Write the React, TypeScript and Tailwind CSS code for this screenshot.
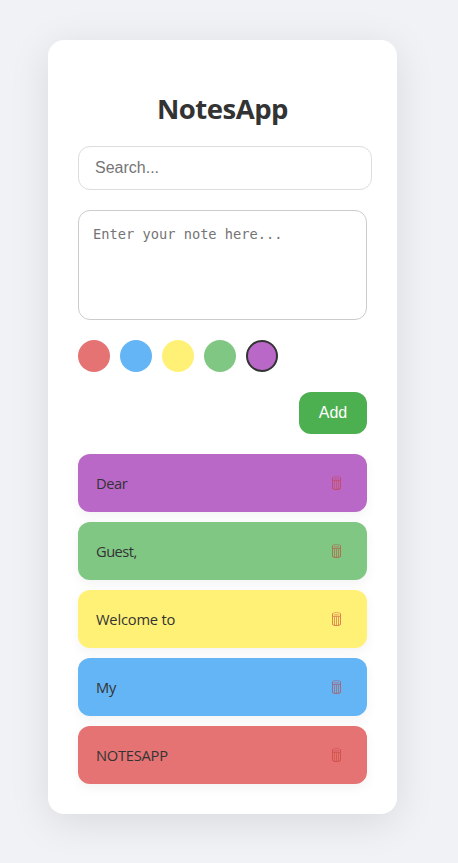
import { useState } from "react";

const colors = ["bg-[#e57373]", "bg-[#64b5f6]", "bg-[#fff176]", "bg-[#81c784]", "bg-[#ba68c8]"];

const initialNotes = [
  { text: "Dear", color: "bg-[#ba68c8]", spacing: "tracking-[-0.4px]" },
  { text: "Guest,", color: "bg-[#81c784]", spacing: "tracking-[-0.55px]" },
  { text: "Welcome to", color: "bg-[#fff176]", spacing: "tracking-[-0.2px]" },
  { text: "My", color: "bg-[#64b5f6]", spacing: "tracking-[-0.1px]" },
  { text: "NOTESAPP", color: "bg-[#e57373]", spacing: "tracking-[-0.25px]" },
];

function TrashIcon() {
  return (
    <svg width="11" height="16" viewBox="0 0 11 16" fill="none" stroke="#c63b3b" strokeOpacity="0.6" strokeWidth="1">
      <path d="M1.5 2.5v2.8h8V2.5" />
      <path d="M1.5 2.8C3 1 8 1 9.5 2.8M3.2 3.7h4.6" strokeOpacity="0.4" />
      <path d="M1.5 5.5v8c.8 1.4 7.2 1.4 8 0v-8" />
      <path d="M3.5 5.8v8.4M5.5 5.8v8.6M7.5 5.8v8.4" stroke="#c84a30" strokeOpacity="0.6" strokeWidth="0.9" />
    </svg>
  );
}

export default function App() {
  const [selected, setSelected] = useState(4);
  const [notes, setNotes] = useState(initialNotes);
  const [draft, setDraft] = useState("");

  const addNote = () => {
    if (!draft.trim()) return;
    setNotes([{ text: draft, color: colors[selected], spacing: "tracking-normal" }, ...notes]);
    setDraft("");
  };

  return (
    <div className="min-h-[863px] bg-[#f0f2f5] pt-10 pl-12 font-['Open_Sans','Noto_Sans',sans-serif] text-[#333]">
      <main className="flex h-[774px] w-[349px] flex-col rounded-[16px] bg-white px-[30px] pt-[50px] shadow-[0_8px_40px_rgba(0,0,0,0.1)]">
        <h1 className="h-[38px] text-center text-[27.5px] leading-[38px] font-bold tracking-[-0.5px]">NotesApp</h1>
        <input
          placeholder="Search..."
          className="mt-[18px] h-11 w-[294px] shrink-0 rounded-[12px] border border-[#ddd] px-4 font-['Liberation_Sans',sans-serif] text-[16px] outline-none placeholder:text-[#757575]"
        />
        <textarea
          placeholder="Enter your note here..."
          value={draft}
          onChange={(e) => setDraft(e.target.value)}
          className="mt-5 h-[110px] w-[289px] shrink-0 resize-none rounded-[12px] border border-[#ccc] px-[14px] py-[14px] font-['DejaVu_Sans_Mono',monospace] text-[13.7px] leading-[18px] outline-none placeholder:text-[#757575]"
        />
        <div className="mt-5 flex gap-[10px]">
          {colors.map((color, i) => (
            <button
              key={color}
              aria-label="Note color"
              onClick={() => setSelected(i)}
              className={`size-8 rounded-full ${i === selected ? "border-2 border-[#333]" : ""} ${color}`}
            />
          ))}
        </div>
        <button
          onClick={addNote}
          className="mt-5 h-[42px] w-[68px] shrink-0 self-end rounded-[12px] bg-[#4caf50] font-['Liberation_Sans',sans-serif] text-[16px] text-white"
        >
          Add
        </button>
        <ul className="mt-5 flex flex-col gap-[10px]">
          {notes.map((note, i) => (
            <li
              key={i}
              className={`flex h-[58px] items-center justify-between rounded-[12px] pr-[25px] pl-[18px] shadow-[0_4px_12px_rgba(0,0,0,0.05)] ${note.color}`}
            >
              <span className={`text-[14.7px] ${note.spacing}`}>{note.text}</span>
              <button aria-label="Delete note" onClick={() => setNotes(notes.filter((_, n) => n !== i))}>
                <TrashIcon />
              </button>
            </li>
          ))}
        </ul>
      </main>
    </div>
  );
}
